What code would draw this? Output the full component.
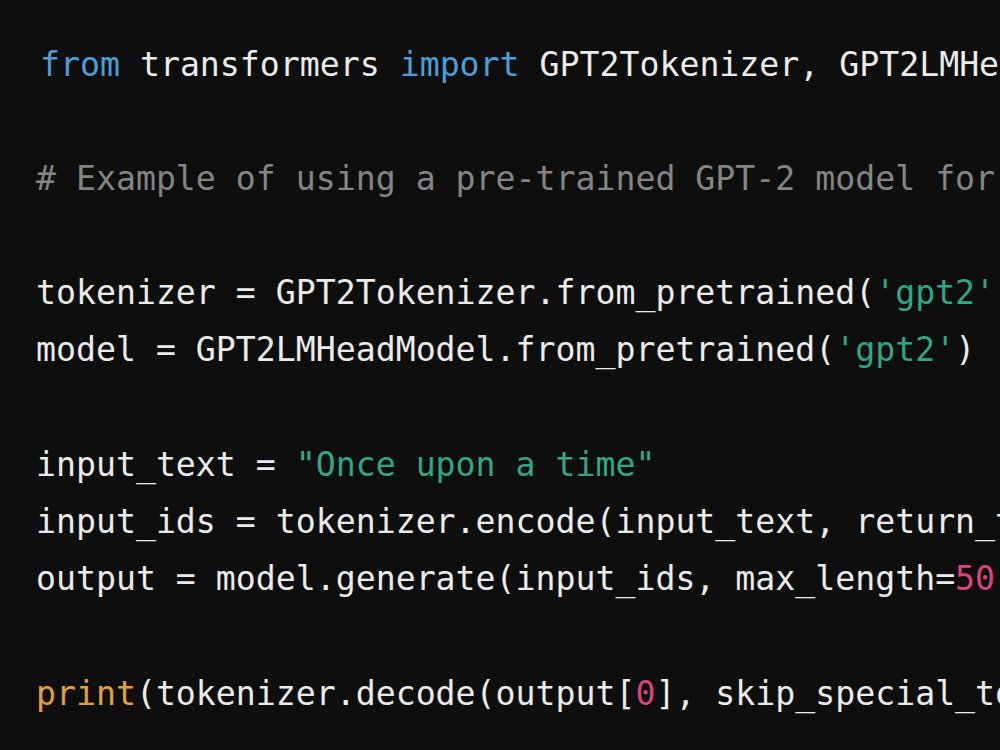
import React from "react";

type Tok = [string, string];

const W = "text-[#ebebeb]";
const K = "text-[#4a9fd6]";
const C = "text-[#858585]";
const S = "text-[#2ea884]";
const N = "text-[#d6457f]";
const F = "text-[#e0a03e]";

const lines: Tok[][] = [
  [[K, "from"], [W, " transformers "], [K, "import"], [W, " GPT2Tokenizer, GPT2LMHeadModel"]],
  [],
  [[C, "# Example of using a pre-trained GPT-2 model for text generation"]],
  [],
  [[W, "tokenizer = GPT2Tokenizer.from_pretrained("], [S, "'gpt2'"], [W, ")"]],
  [[W, "model = GPT2LMHeadModel.from_pretrained("], [S, "'gpt2'"], [W, ")"]],
  [],
  [[W, "input_text = "], [S, "\"Once upon a time\""]],
  [[W, "input_ids = tokenizer.encode(input_text, return_tensors="], [S, "'pt'"], [W, ")"]],
  [[W, "output = model.generate(input_ids, max_length="], [N, "50"], [W, ", num_return_sequences="], [N, "1"], [W, ")"]],
  [],
  [[F, "print"], [W, "(tokenizer.decode(output["], [N, "0"], [W, "], skip_special_tokens="], [K, "True"], [W, "))"]],
];

export default function App() {
  return (
    <div className="w-[1000px] h-[750px] overflow-hidden bg-[#0e0e0e]">
      <div
        className="pt-[35.5px] pl-[36px] whitespace-pre text-[33.2px] leading-[57.2px]"
        style={{ fontFamily: '"DejaVu Sans Mono", monospace' }}
      >
        {lines.map((l, i) => (
          <div key={i} className={i === 0 ? "h-[57.2px] pl-[4px]" : "h-[57.2px]"}>
            {l.map(([c, t], j) => (
              <span key={j} className={c}>
                {t}
              </span>
            ))}
          </div>
        ))}
      </div>
    </div>
  );
}
